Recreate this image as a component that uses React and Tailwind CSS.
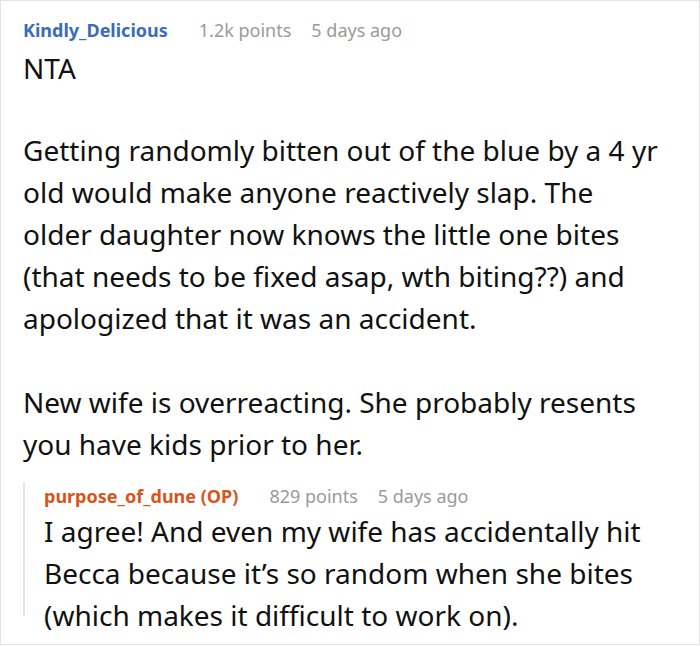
import React from 'react';

const body = "text-[28px] leading-[42px] text-[#111]";

export default function App() {
  return (
    <div className="w-[700px] h-[645px] border border-[#e3e3e3] bg-white pl-[22px] pt-[15px] font-['Noto_Sans',sans-serif] overflow-hidden">
      {/* Top comment */}
      <div className="flex items-baseline text-[18px] leading-[28px]">
        <span className="font-bold text-[#3b6cb7]">Kindly_Delicious</span>
        <span className="ml-[31px] text-[#9a9a9a]">1.2k points</span>
        <span className="ml-[20px] text-[#9a9a9a]">5 days ago</span>
      </div>
      <div className={`${body} mt-[3px]`}>
        <p>NTA</p>
        <p className="mt-[40px]">
          Getting randomly bitten out of the blue by a 4 yr<br />
          old would make anyone reactively slap. The<br />
          older daughter now knows the little one bites<br />
          (that needs to be fixed asap, wth biting??) and<br />
          apologized that it was an accident.
        </p>
        <p className="mt-[42px]">
          New wife is overreacting. She probably resents<br />
          you have kids prior to her.
        </p>
      </div>

      {/* Reply */}
      <div className="mt-[28px] h-[134px] border-l-2 border-[#e6e6e6] pl-[19px]">
        <div className="-mt-[11px] flex items-baseline text-[18px] leading-[28px]">
          <span className="font-bold text-[#d8541c]">purpose_of_dune (OP)</span>
          <span className="ml-[31px] text-[#9a9a9a]">829 points</span>
          <span className="ml-[20px] text-[#9a9a9a]">5 days ago</span>
        </div>
        <p className={body}>
          I agree! And even my wife has accidentally hit<br />
          Becca because it’s so random when she bites<br />
          (which makes it difficult to work on).
        </p>
      </div>
    </div>
  );
}
